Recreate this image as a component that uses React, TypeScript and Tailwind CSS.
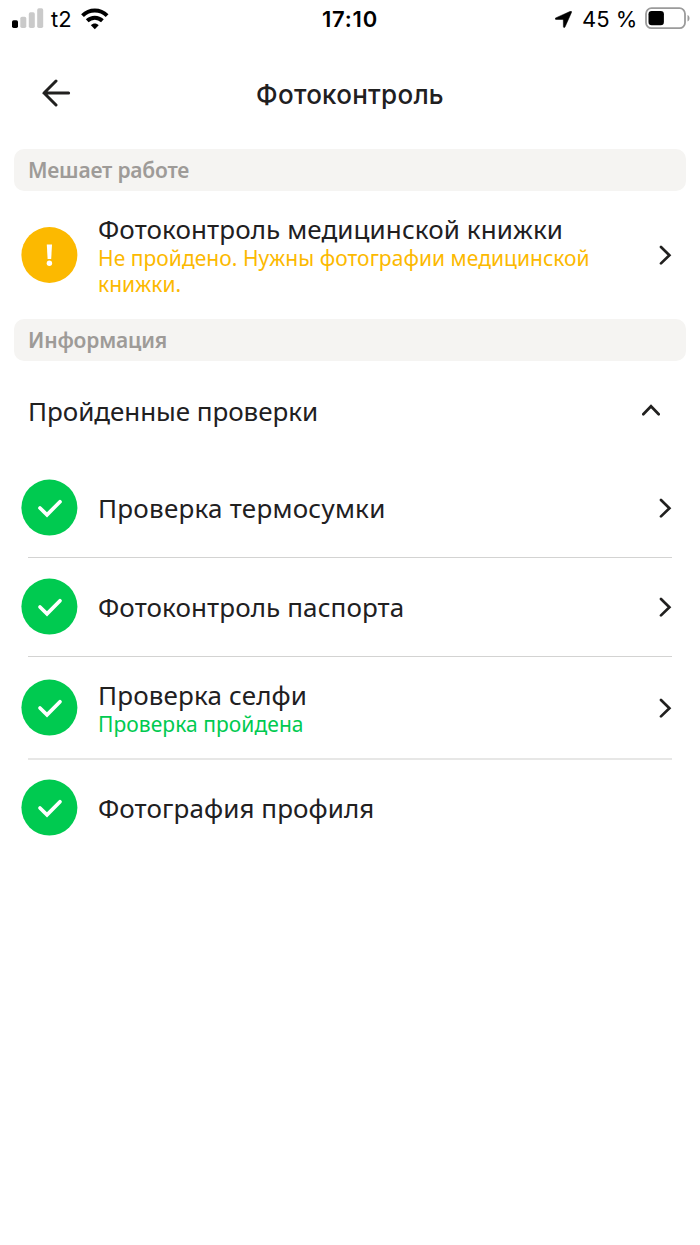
import type { ReactNode } from "react";

function Chevron() {
  return (
    <svg className="mr-7 h-[20px] w-[13px] shrink-0" viewBox="0 0 13 20" fill="none" stroke="#21201f" strokeWidth="2.7" strokeLinecap="round" strokeLinejoin="miter">
      <path d="M2 2L10.4 10.3L2 18.4" />
    </svg>
  );
}

function StatusBar() {
  return (
    <div className="flex h-10 shrink-0 items-start font-['Inter','Liberation_Sans',sans-serif] text-black">
      <div className="flex w-[250px] pl-3">
        <svg className="mt-2 h-5 w-8" viewBox="0 0 32 20">
          <rect x="0" y="12.3" width="6" height="7.7" rx="1.7" fill="#000" />
          <rect x="8.3" y="8.7" width="6" height="11.3" rx="1.7" fill="#cacaca" />
          <rect x="16.8" y="4.2" width="6" height="15.8" rx="1.7" fill="#cacaca" />
          <rect x="25.2" y="0.3" width="6" height="19.7" rx="1.7" fill="#cacaca" />
        </svg>
        <span className="mt-1 ml-[7px] w-[23px] text-[22px] leading-[30px] tracking-[0px]">t2</span>
        <svg className="mt-2 ml-[7px] h-[22px] w-[28px]" viewBox="0 0 28 22" fill="none" stroke="#000">
          <path d="M1.5 7.6C8.5 .9 19.1 .9 26.1 7.6" strokeWidth="4" />
          <path d="M6.2 12.7C10.6 8.6 17 8.6 21.4 12.7" strokeWidth="4" />
          <path d="M13.8 21.2L9.9 17.2C12 15 15.6 15 17.7 17.2Z" fill="#000" stroke="none" />
        </svg>
      </div>
      <div className="mt-1 w-[200px] text-center text-[22px] leading-[30px] font-semibold tracking-[0.8px]">17:10</div>
      <div className="flex flex-1">
        <svg className="mt-[11px] ml-[105px] h-[17px] w-[17px]" viewBox="0 0 17 17">
          <path d="M15.4 .3C16.3 -.1 16.9 .5 16.5 1.4L10 16C9.6 16.9 8.4 16.7 8.4 15.8L8.3 9C8.3 8.7 8.1 8.5 7.8 8.5L1 8.4C0 8.4-.2 7.3 .7 6.9Z" fill="#000" stroke="#000" strokeWidth=".5" />
        </svg>
        <span className="mt-1 ml-[10px] w-[56px] text-[22px] leading-[30px] whitespace-nowrap">45 %</span>
        <svg className="mt-[7px] ml-[7px] h-[23px] w-[46px]" viewBox="0 0 46 23">
          <rect x="1" y="1.2" width="39" height="20" rx="5.5" fill="none" stroke="#9b9b9b" strokeWidth="1.8" />
          <rect x="3.5" y="4" width="15.4" height="14.3" rx="3.2" fill="#000" />
          <path d="M42.5 8C45.2 9 45.2 13.5 42.5 14.5Z" fill="#9b9b9b" />
        </svg>
      </div>
    </div>
  );
}

function SectionLabel({ children }: { children: ReactNode }) {
  return (
    <div className="mx-3.5 flex h-[42px] shrink-0 items-center rounded-[10px] bg-[#f5f4f2] px-3.5 pt-[2px] text-[21px] font-semibold tracking-[-0.2px] text-[#9e9b98]">
      {children}
    </div>
  );
}

function DoneIcon() {
  return (
    <svg className="ml-[21px] h-14 w-[57px] shrink-0 overflow-visible" viewBox="0 0 57 56" fill="none">
      <circle cx="28.4" cy="27.6" r="28" fill="#00ca50" />
      <path d="M19 28L26 34.8L39 21.7" stroke="#fff" strokeWidth="3.7" strokeLinecap="round" />
    </svg>
  );
}

function Item({ className, title, note, chevron = true }: { className: string; title: ReactNode; note?: ReactNode; chevron?: boolean }) {
  return (
    <div className={`flex shrink-0 items-center ${className}`}>
      <DoneIcon />
      <div className="ml-5 flex-1">
        <div className="text-[26px] leading-[30px]">{title}</div>
        {note}
      </div>
      {chevron && <Chevron />}
    </div>
  );
}

export default function App() {
  return (
    <div className="flex h-[1245px] w-[700px] flex-col overflow-hidden bg-white font-['Noto_Sans',sans-serif] text-[#21201f]">
      <StatusBar />
      <header className="flex h-[109px] shrink-0 items-start">
        <svg className="mt-[39px] ml-[42px] h-[28px] w-[29px]" viewBox="0 0 29 28" fill="none" stroke="#21201f" strokeWidth="3" strokeLinecap="round">
          <path d="M14 2L2 14L14 26M2 14H26.6" />
        </svg>
        <h1 className="mt-[39px] ml-[79px] w-[400px] text-center font-['Inter',sans-serif] text-[26px] leading-[32px] font-medium tracking-[0.25px]">
          Фотоконтроль
        </h1>
      </header>

      <SectionLabel>Мешает работе</SectionLabel>

      <div className="flex h-32 shrink-0 items-center">
        <svg className="ml-[21px] h-14 w-[57px] shrink-0 overflow-visible" viewBox="0 0 57 56">
          <circle cx="28.4" cy="28" r="28" fill="#fcb900" />
          <path d="M25.8 17.6H31L30.2 32H26.6Z" fill="#fff" />
          <circle cx="28.4" cy="36.3" r="2.7" fill="#fff" />
        </svg>
        <div className="ml-5 flex-1 pt-px">
          <div className="text-[26px] leading-[29px] tracking-[0.1px]">Фотоконтроль медицинской книжки</div>
          <div className="-mb-px pt-px text-[21px] leading-[26px] font-[450] tracking-[0.04px] text-[#fcb900]">
            Не пройдено. Нужны фотографии медицинской
            <br />
            книжки.
          </div>
        </div>
        <Chevron />
      </div>

      <SectionLabel>Информация</SectionLabel>

      <div className="flex h-[98px] shrink-0 items-center justify-between pr-10 pl-7">
        <div className="pt-[2px] text-[26px] leading-[30px] tracking-[-0.05px]">Пройденные проверки</div>
        <svg className="h-[13px] w-[18px]" viewBox="0 0 18 13" fill="none" stroke="#21201f" strokeWidth="2.7" strokeLinecap="round">
          <path d="M1.3 10.3L9 2.3L16.7 10.3" />
        </svg>
      </div>

      <Item className="h-[98px]" title={<span className="tracking-[0.24px]">Проверка термосумки</span>} />
      <div className="mx-7 h-px shrink-0 bg-[#d3d3d2]" />
      <Item className="h-[98px]" title={<span className="tracking-[0.1px]">Фотоконтроль паспорта</span>} />
      <div className="mx-7 h-px shrink-0 bg-[#d3d3d2]" />
      <Item
        className="h-[101px]"
        title={<span className="tracking-[0.15px]">Проверка селфи</span>}
        note={<div className="-mb-px pt-px text-[21px] leading-[26px] font-[450] tracking-[0.06px] text-[#00ca50]">Проверка пройдена</div>}
      />
      <div className="mx-7 h-[2px] shrink-0 bg-[#e7e7e6]" />
      <Item className="h-[96px]" title={<span className="tracking-[0.08px]">Фотография профиля</span>} chevron={false} />
    </div>
  );
}
